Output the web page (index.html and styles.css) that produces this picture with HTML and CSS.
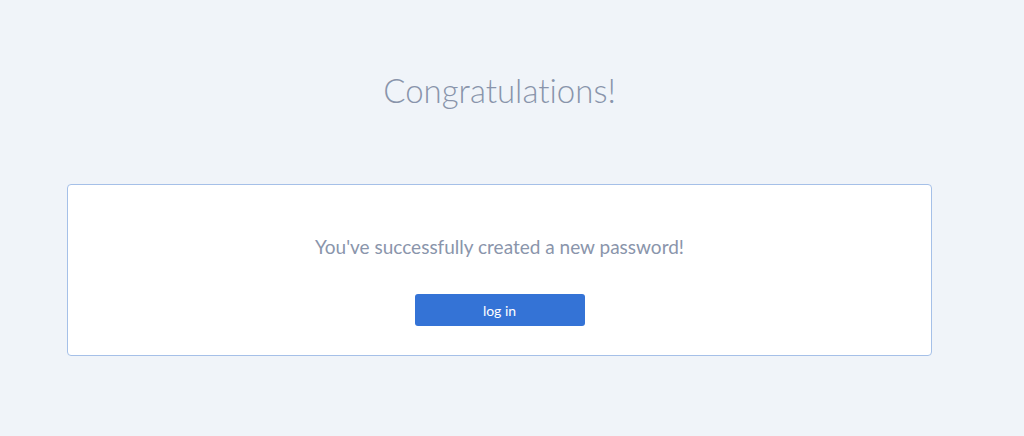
FILE: index.html
```html
<!DOCTYPE html>
<html lang="en">
<head>
    <meta charset="UTF-8">
    <meta name="viewport" content="width=device-width, initial-scale=1.0">
    <title>Congratulations</title>
    <link rel="stylesheet" href="styles.css">
</head>
<body>
    <div class="page">
        <h1>Congratulations!</h1>

        <div class="card">
            <p class="message">You've successfully created a new password!</p>
            <button class="login-button" type="button">log in</button>
        </div>
    </div>
</body>
</html>
```
FILE: styles.css
```css
body {
    margin: 0;
    background: #f0f4f9;
    font-family: 'Lato', 'Open Sans', sans-serif;
    font-weight: 300;
    font-variant-ligatures: none;
    color: #8a95ab;
}

.page {
    padding: 68px 92px 0 67px;
}

h1 {
    margin: 0;
    text-align: center;
    font-size: 33px;
    font-weight: 300;
    line-height: 44px;
    color: #8994ab;
}

.card {
    margin-top: 72px;
    background: #fff;
    border: 1px solid #a5c0e8;
    border-radius: 4px;
    height: 172px;
    box-sizing: border-box;
    display: flex;
    flex-direction: column;
    align-items: center;
    padding-top: 50px;
}

.message {
    margin: 0;
    font-size: 19px;
    font-weight: 400;
    line-height: 24px;
    color: #8a95ab;
}

.login-button {
    margin-top: 35px;
    width: 170px;
    height: 32px;
    border: none;
    border-radius: 3px;
    background: #3473d6;
    color: #fff;
    font-family: 'Lato', 'Open Sans', sans-serif;
    font-weight: 400;
    font-size: 14px;
    cursor: pointer;
}
```
